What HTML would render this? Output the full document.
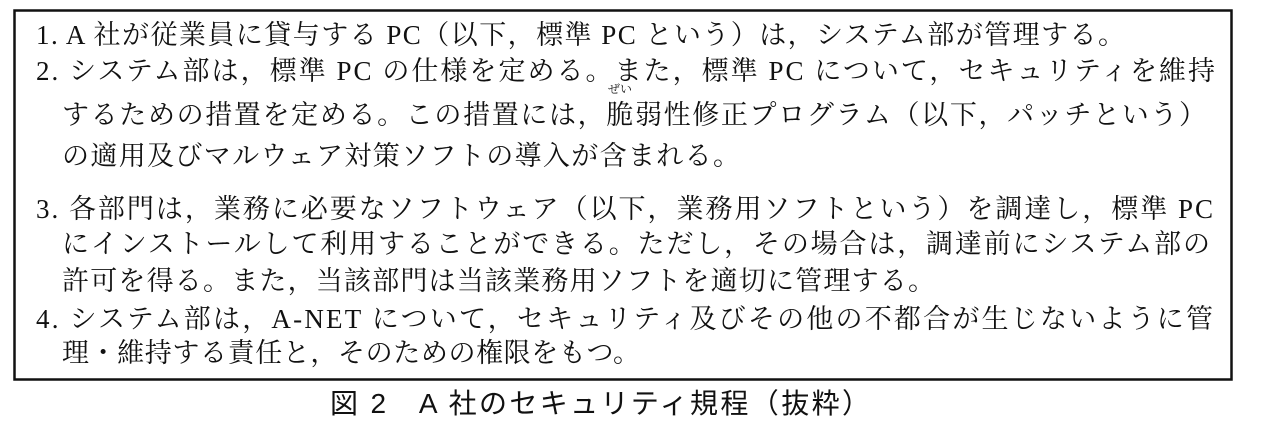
<!DOCTYPE html>
<html><head><meta charset="utf-8"><style>
html,body{margin:0;padding:0;background:#fff;width:1276px;height:422px;overflow:hidden}
svg text{font-family:"Liberation Serif","Noto Serif CJK SC",serif;font-size:27px;fill:#111}
svg text.cap{font-family:"Liberation Sans","Noto Sans CJK JP",sans-serif;font-size:28px}
svg text.rb{font-size:12px}
</style></head><body>
<svg width="1276" height="422" xmlns="http://www.w3.org/2000/svg">
<rect x="14.5" y="10.5" width="1217" height="369" fill="none" stroke="#111" stroke-width="2.5"/>
<text x="36" y="44" textLength="1089" lengthAdjust="spacing">1. A 社が従業員に貸与する PC（以下，標準 PC という）は，システム部が管理する。</text>
<text x="36" y="80" textLength="1179" lengthAdjust="spacing">2. システム部は，標準 PC の仕様を定める。また，標準 PC について，セキュリティを維持</text>
<text class="rb" x="608" y="93">ぜい</text>
<text x="62" y="124" textLength="1144" lengthAdjust="spacing">するための措置を定める。この措置には，脆弱性修正プログラム（以下，パッチという）</text>
<text x="62" y="165" textLength="678" lengthAdjust="spacing">の適用及びマルウェア対策ソフトの導入が含まれる。</text>
<text x="36" y="218" textLength="1177" lengthAdjust="spacing">3. 各部門は，業務に必要なソフトウェア（以下，業務用ソフトという）を調達し，標準 PC</text>
<text x="62" y="253" textLength="1148" lengthAdjust="spacing">にインストールして利用することができる。ただし，その場合は，調達前にシステム部の</text>
<text x="62" y="290" textLength="873" lengthAdjust="spacing">許可を得る。また，当該部門は当該業務用ソフトを適切に管理する。</text>
<text x="36" y="328" textLength="1177" lengthAdjust="spacing">4. システム部は，A-NET について，セキュリティ及びその他の不都合が生じないように管</text>
<text x="62" y="362" textLength="578" lengthAdjust="spacing">理・維持する責任と，そのための権限をもつ。</text>
<text class="cap" x="330" y="413" textLength="540" lengthAdjust="spacing">図 2　A 社のセキュリティ規程（抜粋）</text>
</svg>
</body></html>
